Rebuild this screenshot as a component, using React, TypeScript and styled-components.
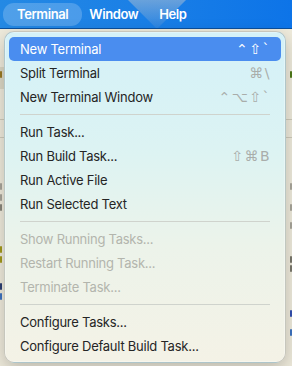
import React from "react";
import styled, { createGlobalStyle } from "styled-components";

const GlobalStyle = createGlobalStyle`
  html, body {
    margin: 0;
    padding: 0;
    width: 292px;
    height: 366px;
    overflow: hidden;
    background: #efebdc;
  }
`;

type Entry =
  | { kind: "item"; label: string; keys?: string; active?: boolean; disabled?: boolean }
  | { kind: "sep" };

const entries: Entry[] = [
  { kind: "item", label: "New Terminal", keys: "⌃⇧`", active: true },
  { kind: "item", label: "Split Terminal", keys: "⌘\\" },
  { kind: "item", label: "New Terminal Window", keys: "⌃⌥⇧`" },
  { kind: "sep" },
  { kind: "item", label: "Run Task..." },
  { kind: "item", label: "Run Build Task...", keys: "⇧⌘B" },
  { kind: "item", label: "Run Active File" },
  { kind: "item", label: "Run Selected Text" },
  { kind: "sep" },
  { kind: "item", label: "Show Running Tasks...", disabled: true },
  { kind: "item", label: "Restart Running Task...", disabled: true },
  { kind: "item", label: "Terminate Task...", disabled: true },
  { kind: "sep" },
  { kind: "item", label: "Configure Tasks..." },
  { kind: "item", label: "Configure Default Build Task..." },
];

// slivers of the editor behind the menu (only the edges show)
type Row = { h: number; left?: string; right?: string; shade?: boolean; rule?: boolean };
const editorRows: Row[] = [
  { h: 38 },
  { h: 14, shade: true, left: "#9a7a22", right: "#4f7a18" },
  { h: 8, shade: true },
  { h: 30 },
  { h: 1, rule: true },
  { h: 17 },
  { h: 1, rule: true },
  { h: 42 },
  { h: 12, left: "#a8a59a", right: "#aaa79c" },
  { h: 10, left: "#a8a59a" },
  { h: 11, left: "#8a877c", right: "#a8a59a" },
  { h: 7 },
  { h: 10, right: "#a8a59a" },
  { h: 14 },
  { h: 10, left: "#a39a1c" },
  { h: 10, left: "#a39a1c", right: "#7a776c" },
  { h: 8, right: "#7a776c" },
  { h: 9 },
  { h: 10, left: "#2c3f73" },
  { h: 10, left: "#3e73c0" },
  { h: 7 },
  { h: 10, right: "#3350b0" },
  { h: 9 },
  { h: 10, right: "#3e73c0" },
  { h: 15 },
];

export default function App() {
  return (
    <>
      <GlobalStyle />
      <Screen>
        <MenuBar>
          <BarTitle $active>Terminal</BarTitle>
          <BarTitle>Window</BarTitle>
          <BarTitle>Help</BarTitle>
        </MenuBar>
        <Editor>
          {editorRows.map((r, i) => (
            <EditorRow key={i} $h={r.h} $shade={r.shade} $rule={r.rule}>
              <Mark $color={r.left} />
              <Mark $color={r.right} />
            </EditorRow>
          ))}
          <CodeTail />
        </Editor>
        <Menu>
          {entries.map((e, i) =>
            e.kind === "sep" ? (
              <Separator key={i} />
            ) : (
              <Item key={i} $active={e.active} $disabled={e.disabled}>
                <span>{e.label}</span>
                {e.keys && <Keys $active={e.active}>{e.keys}</Keys>}
              </Item>
            )
          )}
        </Menu>
      </Screen>
    </>
  );
}

const Screen = styled.div`
  position: relative;
  width: 292px;
  height: 366px;
  overflow: hidden;
  background: #efebdc;
`;

const MenuBar = styled.div`
  position: relative;
  display: flex;
  align-items: center;
  height: 29px;
  padding-left: 3px;
  box-sizing: border-box;
  background: linear-gradient(90deg, #2489e4 0%, #1b80e6 45%, #0d74e8 100%);
  border-bottom: 1px solid #0b4f9c;
  overflow: hidden;

  &::before {
    content: "";
    position: absolute;
    left: 128px;
    top: 0;
    width: 58px;
    height: 29px;
    background: linear-gradient(180deg, rgba(170, 190, 210, 0.55), rgba(120, 160, 205, 0.15));
    clip-path: polygon(0 0, 100% 0, 50% 100%);
  }
`;

const BarTitle = styled.div<{ $active?: boolean }>`
  position: relative;
  height: 23px;
  display: flex;
  align-items: center;
  padding: 0 ${(p) => (p.$active ? "14px" : "10px")};
  margin-right: ${(p) => (p.$active ? "-3px" : "1px")};
  border-radius: 11px;
  background: ${(p) => (p.$active ? "rgba(255, 255, 255, 0.2)" : "transparent")};
  color: #fff;
  font-family: Inter, "Liberation Sans", sans-serif;
  font-size: 13px;
  font-weight: 600;
  letter-spacing: -0.4px;
`;

const Editor = styled.div`
  display: flex;
  flex-direction: column;
`;

const EditorRow = styled.div<{ $h: number; $shade?: boolean; $rule?: boolean }>`
  height: ${(p) => p.$h}px;
  display: flex;
  align-items: center;
  justify-content: space-between;
  background: ${(p) =>
    p.$rule
      ? "#cfcbbb"
      : p.$shade
      ? "linear-gradient(90deg, #dcd8c6 0 4px, transparent 4px)"
      : "transparent"};
`;

const Mark = styled.span<{ $color?: string }>`
  width: 2px;
  height: 7px;
  border-radius: 1px;
  background: ${(p) => p.$color || "transparent"};
`;

const CodeTail = styled.div`
  height: 3px;
  margin: 3px 20px 0 40px;
  background: repeating-linear-gradient(
    90deg,
    #2b3560 0 5px,
    transparent 5px 8px,
    #2b3560 8px 15px,
    transparent 15px 19px
  );
  opacity: 0.75;
`;

const Menu = styled.div`
  position: absolute;
  top: 31px;
  left: 4px;
  width: 282px;
  box-sizing: border-box;
  padding: 5px 4px 4px;
  border-radius: 10px;
  background: linear-gradient(180deg, #d4f1f8 0%, #dcf3f3 35%, #ecf3ea 65%, #f4f2e6 100%);
  border: 0.5px solid rgba(0, 0, 0, 0.18);
  box-shadow: 0 6px 18px rgba(0, 0, 0, 0.22), 0 0 0 0.5px rgba(255, 255, 255, 0.6) inset;
`;

const Item = styled.div<{ $active?: boolean; $disabled?: boolean }>`
  display: flex;
  align-items: center;
  justify-content: space-between;
  height: 24px;
  padding: 0 10px 0 11px;
  border-radius: 5px;
  background: ${(p) => (p.$active ? "#4a8def" : "transparent")};
  color: ${(p) => (p.$active ? "#fff" : p.$disabled ? "#b3b5ad" : "#252525")};
  font-family: Inter, "Liberation Sans", sans-serif;
  font-size: 13px;
  font-weight: 400;
  letter-spacing: -0.25px;
`;

const Keys = styled.span<{ $active?: boolean }>`
  font-family: "DejaVu Sans", sans-serif;
  font-size: 14px;
  letter-spacing: 1.5px;
  color: ${(p) => (p.$active ? "#fff" : "#a9adaa")};
`;

const Separator = styled.div`
  height: 11px;
  display: flex;
  align-items: center;
  padding: 0 11px;

  &::after {
    content: "";
    flex: 1;
    height: 1px;
    background: #cfd3cd;
  }
`;
